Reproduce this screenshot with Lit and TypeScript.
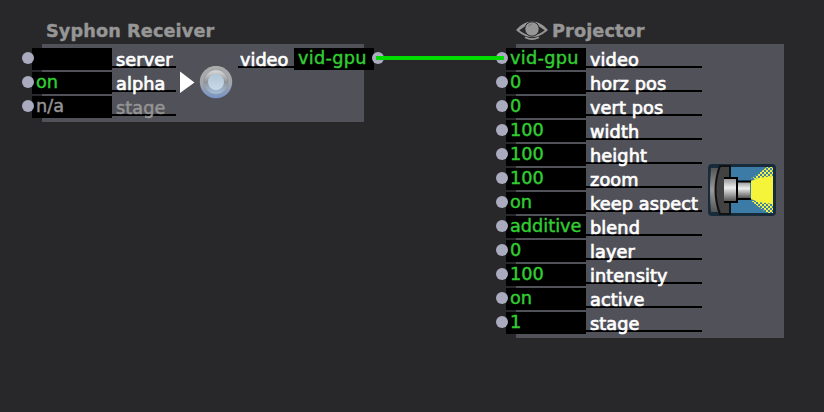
import { LitElement, html, css, svg } from "lit";
import { customElement, property } from "lit/decorators.js";

interface Port {
  value: string;
  label: string;
  muted?: boolean;
}

const receiverInputs: Port[] = [
  { value: "", label: "server" },
  { value: "on", label: "alpha" },
  { value: "n/a", label: "stage", muted: true },
];

const projectorInputs: Port[] = [
  { value: "vid-gpu", label: "video" },
  { value: "0", label: "horz pos" },
  { value: "0", label: "vert pos" },
  { value: "100", label: "width" },
  { value: "100", label: "height" },
  { value: "100", label: "zoom" },
  { value: "on", label: "keep aspect" },
  { value: "additive", label: "blend" },
  { value: "0", label: "layer" },
  { value: "100", label: "intensity" },
  { value: "on", label: "active" },
  { value: "1", label: "stage" },
];

@customElement("port-list")
export class PortList extends LitElement {
  @property({ attribute: false }) ports: Port[] = [];

  static styles = css`
    :host { display: flex; flex-direction: column; gap: 2px; }
    .row { display: flex; height: 22px; }
    .dot { width: 12px; height: 12px; margin: 4px -2px 0 0; border-radius: 50%; background: #aaabbe; flex: none; position: relative; }
    .value { box-sizing: border-box; width: 80px; padding-left: 4px; background: #000; color: #32cd32; line-height: 20px; white-space: pre; flex: none; -webkit-text-stroke: 0.45px currentColor; }
    .stream { letter-spacing: 0.3px; }
    .label { flex: 1; height: 18px; padding-left: 4px; line-height: 24px; letter-spacing: 0.1px; color: #fff; white-space: pre; border-bottom: 2px solid #000; -webkit-text-stroke: 0.7px currentColor; }
    .muted .value, .muted .label { color: #959595; }
    .muted .label { -webkit-text-stroke-width: 0.5px; }
  `;

  render() {
    return this.ports.map(
      (p) => html`<div class="row ${p.muted ? "muted" : ""}">
        <span class="dot"></span><span class="value ${p.value === "vid-gpu" ? "stream" : ""}">${p.value}</span><span class="label">${p.label}</span>
      </div>`
    );
  }
}

const eye = svg`
  <path d="M0 10Q7 1.5 16 1.5T32 10L30 11.5Q25 7 21.5 6H10.5Q7 7 2 11.5Z" fill="#969696"/>
  <path d="M2 10.5Q16 22 30 10.5" fill="none" stroke="#969696" stroke-width="1.8"/>
  <circle cx="16" cy="9" r="7.2" fill="#969696" stroke="#28282a" stroke-width="1"/>
  <path d="M12.5 6.5Q13.5 4.5 16 4" fill="none" stroke="#777" stroke-width="1.2"/>
  <path d="M9 17.2Q16 21 23 17.2" fill="none" stroke="#969696" stroke-width="1.6"/>
`;

@customElement("app-root")
export class AppRoot extends LitElement {
  static styles = css`
    :host { display: block; position: relative; width: 824px; height: 412px; overflow: hidden; background: #28282a; font: 17.7px "DejaVu Sans", Verdana, sans-serif; }
    svg { display: block; }
    .node { position: absolute; top: 22px; }
    .receiver { left: 42px; width: 322px; }
    .projector { left: 516px; width: 268px; }
    .title { display: flex; height: 22px; padding-left: 4px; line-height: 19px; letter-spacing: 0.1px; font-weight: bold; color: #969696; white-space: pre; -webkit-text-stroke: 0.4px currentColor; }
    .projector .title { padding-left: 0; gap: 4px; }
    .eye { margin-top: -2px; flex: none; }
    .panel { box-sizing: border-box; display: flex; background: #515159; padding-top: 4px; }
    .receiver .panel { height: 78px; }
    .projector .panel { height: 294px; }
    .receiver port-list { width: 154px; margin-left: -20px; flex: none; }
    .projector port-list { width: 206px; margin-left: -20px; flex: none; }
    .trigger { margin: 18px 0 0 4px; flex: none; }
    .output { display: flex; height: 22px; margin-left: 4px; flex: none; }
    .out-label { box-sizing: border-box; width: 56px; height: 20px; padding-left: 2px; line-height: 24px; color: #fff; border-bottom: 2px solid #000; -webkit-text-stroke: 0.7px currentColor; }
    .out-value { box-sizing: border-box; width: 80px; padding-left: 4px; line-height: 20px; letter-spacing: 0.3px; background: #000; color: #32cd32; -webkit-text-stroke: 0.45px currentColor; }
    .out-dot { width: 12px; height: 12px; margin: 4px 0 0 -2px; border-radius: 50%; background: #aaabbe; flex: none; }
    .lamp { margin: 116px 0 0 6px; flex: none; }
    .wire { position: absolute; left: 376px; top: 56px; width: 128px; height: 4px; background: #00dc00; }
  `;

  render() {
    return html`
      <section class="node receiver">
        <div class="title">Syphon Receiver</div>
        <div class="panel">
          <port-list .ports=${receiverInputs}></port-list>
          <svg class="trigger" width="54" height="36" viewBox="0 0 54 36">
            <defs>
              <linearGradient id="rim" x1="0" y1="0" x2="0" y2="1">
                <stop offset="0" stop-color="#aaa" /><stop offset=".5" stop-color="#a3a6aa" /><stop offset="1" stop-color="#7795c8" />
              </linearGradient>
              <linearGradient id="ring" x1="0" y1="0" x2="0" y2="1">
                <stop offset="0" stop-color="#ddd" /><stop offset=".5" stop-color="#909498" /><stop offset="1" stop-color="#a6c0e2" />
              </linearGradient>
              <linearGradient id="core" x1="0" y1="0" x2="0" y2="1">
                <stop offset="0" stop-color="#b1c5d5" /><stop offset="1" stop-color="#c6dae8" />
              </linearGradient>
            </defs>
            <path d="M0 5.5V27L14.5 16.5Z" fill="#fff" />
            <circle cx="36" cy="16" r="16.2" fill="url(#rim)" />
            <circle cx="36" cy="16" r="12.3" fill="url(#ring)" stroke="#8d939b" stroke-width=".6" />
            <circle cx="36" cy="16" r="8" fill="url(#core)" />
          </svg>
          <div class="output">
            <span class="out-label">video</span><span class="out-value">vid-gpu</span><span class="out-dot"></span>
          </div>
        </div>
      </section>

      <section class="node projector">
        <div class="title"><svg class="eye" width="32" height="21" viewBox="0 0 32 21">${eye}</svg>Projector</div>
        <div class="panel">
          <port-list .ports=${projectorInputs}></port-list>
          <svg class="lamp" width="68" height="52" viewBox="0 0 68 52">
            <defs>
              <linearGradient id="metal" x1="0" y1="0" x2="0" y2="1">
                <stop offset="0" stop-color="#999" /><stop offset=".4" stop-color="#eee" /><stop offset="1" stop-color="#555" />
              </linearGradient>
              <linearGradient id="back" x1="0" y1="0" x2="0" y2="1">
                <stop offset="0" stop-color="#555" /><stop offset=".5" stop-color="#999" /><stop offset="1" stop-color="#555" />
              </linearGradient>
              <pattern id="rays" width="4" height="4" patternUnits="userSpaceOnUse">
                <rect width="4" height="4" fill="#3c7faa" />
                <path d="M0 0h2v2H0zM2 2h2v2H2z" fill="#f4f23a" />
              </pattern>
            </defs>
            <rect x="0" y="0" width="68" height="52" rx="4" fill="#172b3b" />
            <rect x="23" y="3" width="42" height="46" fill="#3b7ba5" />
            <path d="M3 4H10Q7 25 10 48H3Q1 26 3 4Z" fill="url(#back)" />
            <path d="M12 2H22V50H12Q3 26 12 2Z" fill="#424242" stroke="#111" stroke-width="2" />
            <path d="M43 15L59 3H65V15ZM43 37L59 49H65V37Z" fill="url(#rays)" />
            <path d="M43 17L50 14L65 12V40L50 38L43 35Z" fill="#f5f33a" />
            <rect x="16" y="15" width="12" height="22" fill="url(#metal)" />
            <path d="M16 14H29V38H16" fill="none" stroke="#000" stroke-width="2" />
            <rect x="30" y="18" width="12" height="16" fill="url(#metal)" />
            <path d="M30 17.5H43M30 35H43" stroke="#000" stroke-width="2" />
          </svg>
        </div>
      </section>
      <div class="wire"></div>
    `;
  }
}
